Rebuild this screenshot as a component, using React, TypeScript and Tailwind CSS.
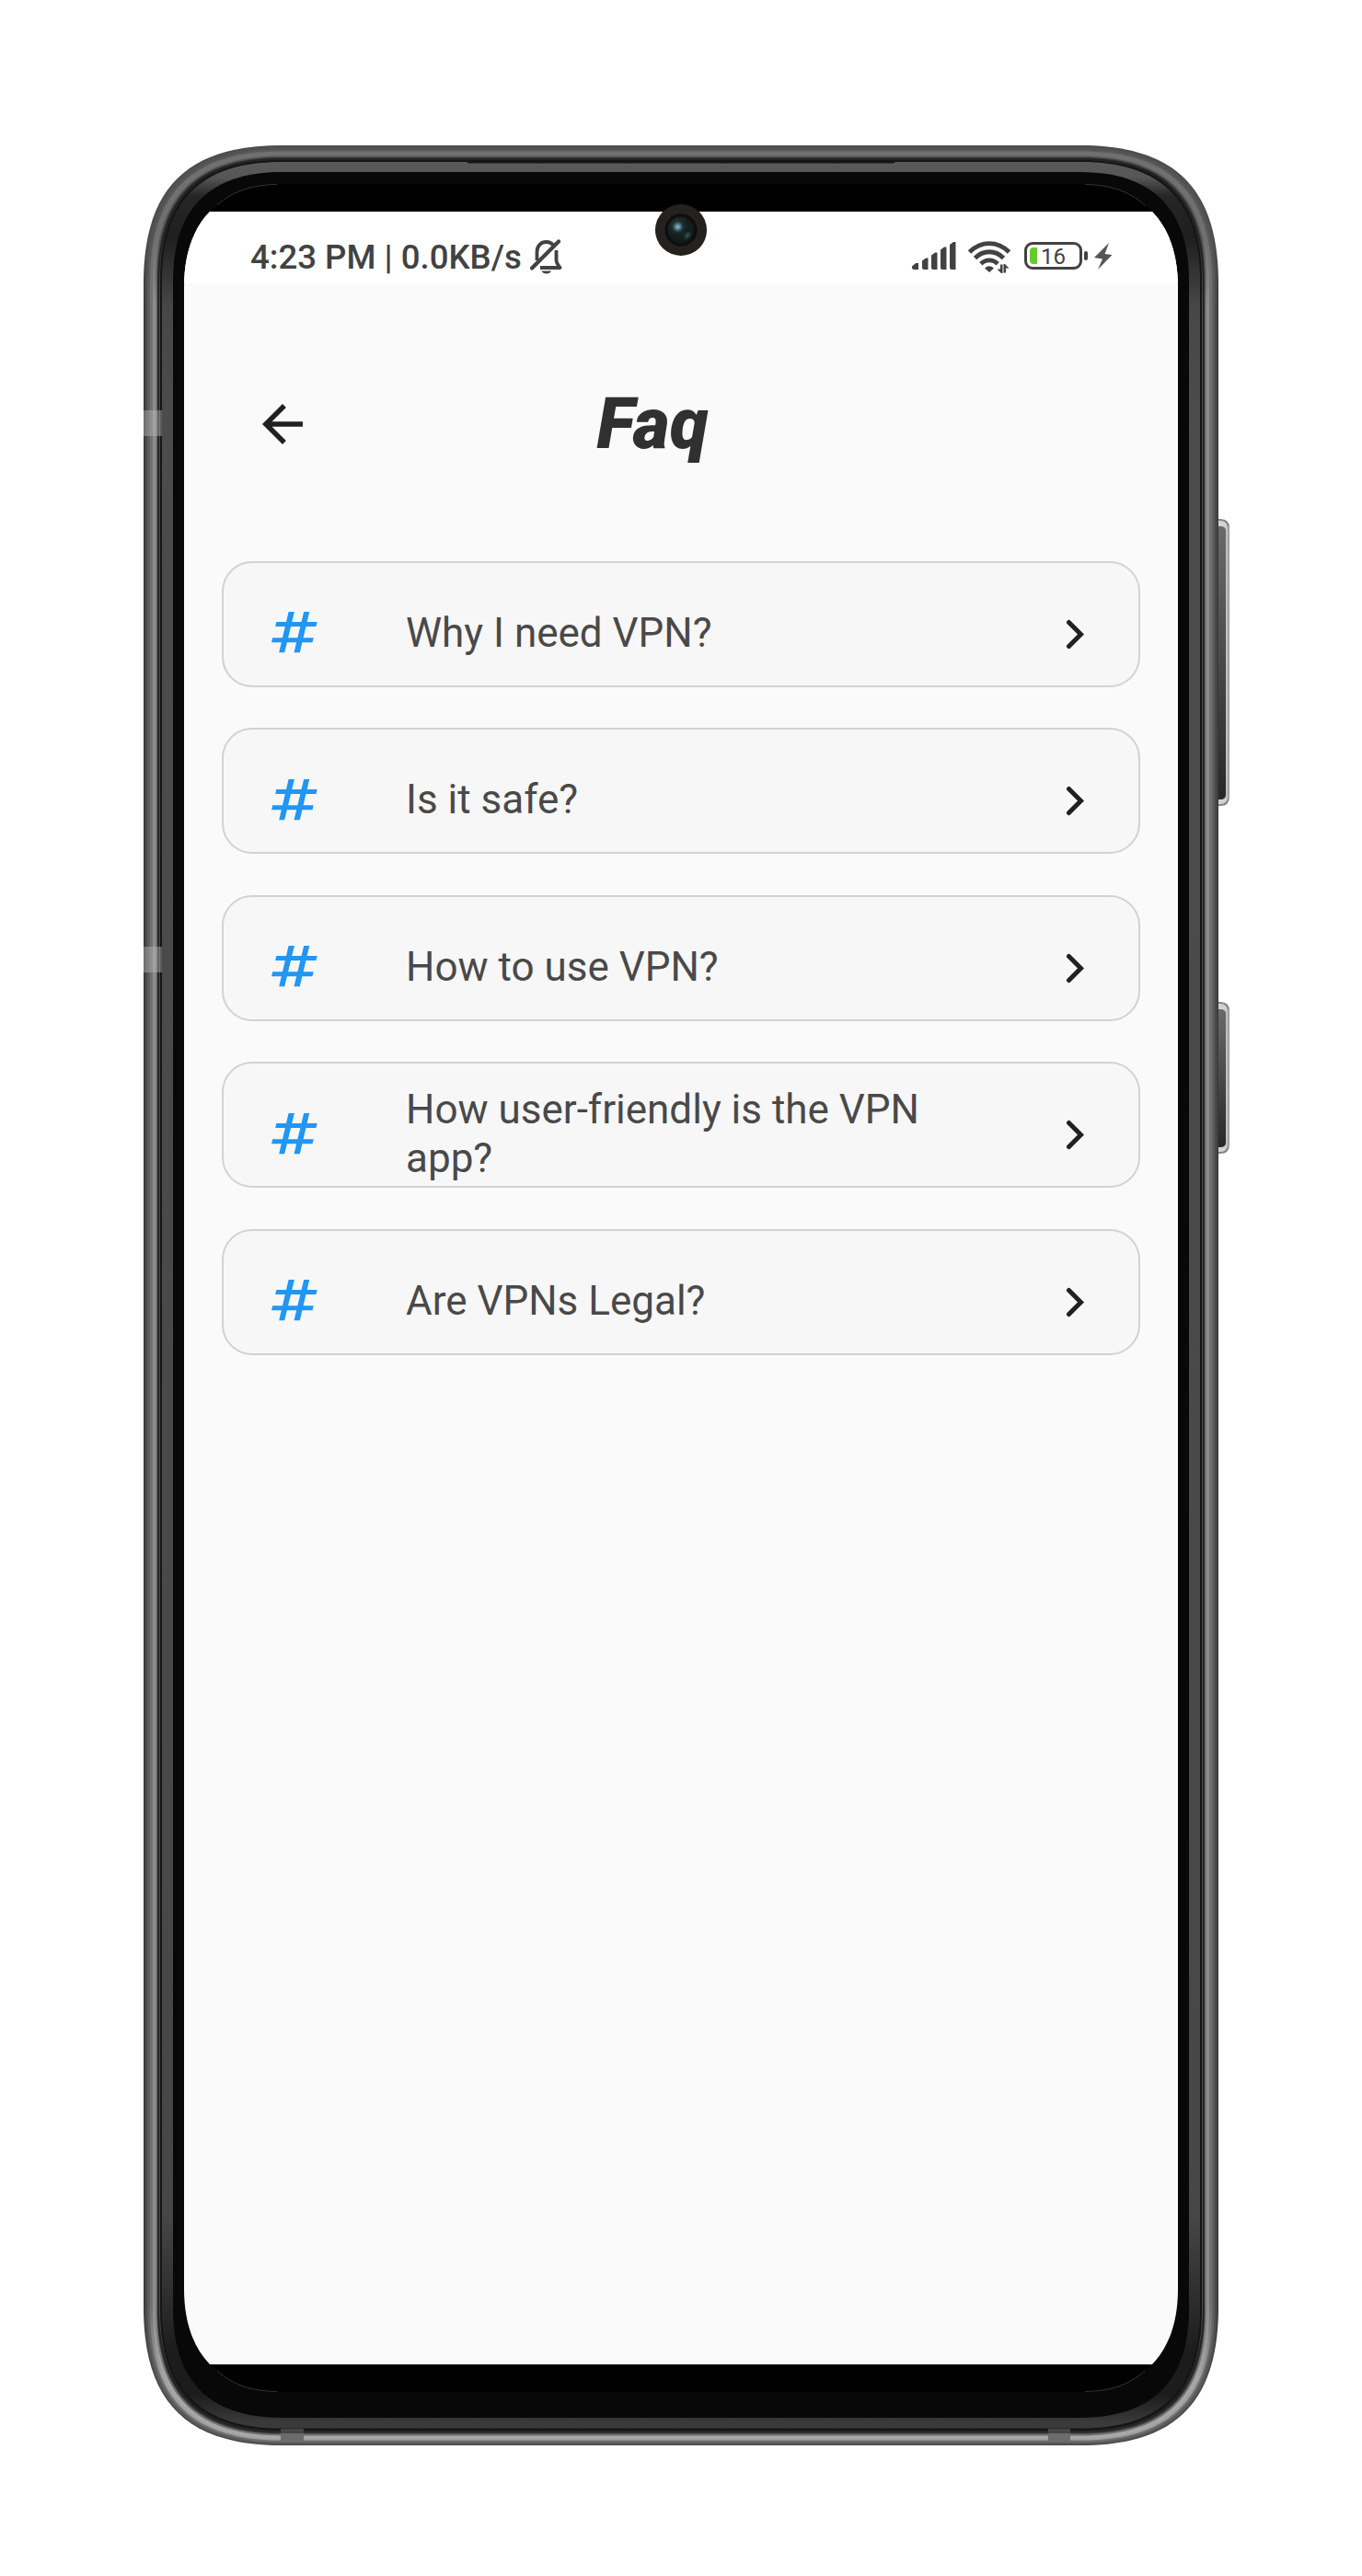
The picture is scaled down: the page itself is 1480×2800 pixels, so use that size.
import React from "react";

const questions = [
  "Why I need VPN?",
  "Is it safe?",
  "How to use VPN?",
  "How user-friendly is the VPN app?",
  "Are VPNs Legal?",
];

/* Rectangle with soft, squircle-like corners. l: corner length, a: handle offset. */
function squircle(x0: number, y0: number, x1: number, y1: number, l: number, a: number) {
  return [
    `M${x0} ${y0 + l}`,
    `C${x0} ${y0 + a} ${x0 + a} ${y0} ${x0 + l} ${y0}`,
    `H${x1 - l}`,
    `C${x1 - a} ${y0} ${x1} ${y0 + a} ${x1} ${y0 + l}`,
    `V${y1 - l}`,
    `C${x1} ${y1 - a} ${x1 - a} ${y1} ${x1 - l} ${y1}`,
    `H${x0 + l}`,
    `C${x0 + a} ${y1} ${x0} ${y1 - a} ${x0} ${y1 - l}`,
    "Z",
  ].join("");
}

/* inset left/right, top, bottom, corner, handle, fill */
const rings: [number, number, number, number, number, string][] = [
  [0, 0, 0, 150, 47, "url(#edge)"],
  [2, 2, 1.5, 148, 46, "url(#outer1)"],
  [4.5, 4.5, 3.5, 146, 46, "url(#outer2)"],
  [7, 6.5, 5.5, 143, 45, "url(#outer3)"],
  [10, 8, 7, 140, 45, "url(#outer4)"],
  [12.5, 11.5, 10.5, 137, 44, "url(#outer5)"],
  [14.5, 13, 12.5, 135, 43, "#3a3a3a"],
  [15.5, 14, 14, 134, 43, "#222222"],
  [17, 15.2, 15.5, 133, 43, "url(#groove)"],
  [18, 16, 16, 132, 42, "#151515"],
  [20, 18, 18.5, 130, 42, "url(#inner)"],
  [32, 29, 30, 118, 40, "#080808"],
];

function PhoneFrame() {
  const stops = (top: string, side: string, bottom: string) => (
    <>
      <stop offset="0" stopColor={top} />
      <stop offset="0.04" stopColor={top} />
      <stop offset="0.07" stopColor={side} />
      <stop offset="0.94" stopColor={side} />
      <stop offset="0.97" stopColor={bottom} />
      <stop offset="1" stopColor={bottom} />
    </>
  );
  const g = { gradientUnits: "userSpaceOnUse" as const, x1: 0, y1: 0, x2: 0, y2: 2500 };
  return (
    <svg className="absolute inset-0" width="1180" height="2500" viewBox="0 0 1180 2500" fill="none">
      <defs>
        <linearGradient id="edge" {...g}>{stops("#4c4c4c", "#3c3c3c", "#4a4a4a")}</linearGradient>
        <linearGradient id="outer1" {...g}>{stops("#525252", "#4c4c4c", "#5a5a5a")}</linearGradient>
        <linearGradient id="outer2" {...g}>{stops("#595959", "#606060", "#707070")}</linearGradient>
        <linearGradient id="outer3" {...g}>{stops("#707070", "#717171", "#a0a0a0")}</linearGradient>
        <linearGradient id="outer4" {...g}>{stops("#707070", "#8e8e8e", "#a8a8a8")}</linearGradient>
        <linearGradient id="outer5" {...g}>{stops("#555555", "#868686", "#707070")}</linearGradient>
        <linearGradient id="groove" {...g}>{stops("#2a2a2a", "#4b4b4b", "#333333")}</linearGradient>
        <linearGradient id="inner" gradientUnits="userSpaceOnUse" x1="0" y1="0" x2="0" y2="2500">
          <stop offset="0.007" stopColor="#5a5a5a" />
          <stop offset="0.014" stopColor="#565656" />
          <stop offset="0.022" stopColor="#262626" />
          <stop offset="0.04" stopColor="#1f1f1f" />
          <stop offset="0.07" stopColor="#474747" />
          <stop offset="0.12" stopColor="#4c4c4c" />
          <stop offset="0.9" stopColor="#474747" />
          <stop offset="0.96" stopColor="#1c1c1c" />
          <stop offset="0.978" stopColor="#1c1c1c" />
          <stop offset="0.99" stopColor="#3a3a3a" />
        </linearGradient>
        <linearGradient id="key" x1="0" y1="0" x2="0" y2="1">
          <stop offset="0" stopColor="#6a6a6a" />
          <stop offset="1" stopColor="#282828" />
        </linearGradient>
        <linearGradient id="keySide" x1="0" y1="0" x2="1" y2="0">
          <stop offset="0" stopColor="#c9c9c9" />
          <stop offset="0.5" stopColor="#b5b5b5" />
          <stop offset="1" stopColor="#8e8e8e" />
        </linearGradient>
      </defs>
      {[[406, 312], [931, 165]].map(([y, h]) => (
        <g key={y}>
          <path d={`M1160 ${y}h10q10 0 10 10v${h - 20}q0 10 -10 10h-10z`} fill="#858585" />
          <path d={`M1160 ${y + 2}h10q8 0 8 9v${h - 22}q0 9 -8 9h-10z`} fill="#d2d2d2" />
          <path d={`M1176 ${y + 8}h2q2 0 2 3v${h - 20}l-4 4z`} fill="url(#keySide)" />
          <path d={`M1160 ${y + 8}h10q6 0 6 5v${h - 25}q0 5 -6 5h-10z`} fill="url(#key)" />
        </g>
      ))}
      {rings.map(([x, t, b, l, a, fill]) => (
        <path key={x} d={squircle(x, t, 1168 - x, 2500 - b, l, a)} fill={fill} />
      ))}
      <path d="M349 16.5H819L815 19.5H353Z" fill="#161616" />
      <path d={squircle(44, 42, 1124, 2442, 112, 40)} fill="#000000" />
      <path d="M80 65C98 49 118 43 145 42.500M1088 65C1070 49 1050 43 1023 42.500M80 2419C98 2435 118 2441 145 2441.500M1088 2419C1070 2435 1050 2441 1023 2441.500" stroke="#3c3c3c" strokeWidth="0.8" />
      <g fill="#bdbdbd" fillOpacity="0.42">
        <rect x="0" y="288" width="20" height="28" />
        <rect x="0" y="871" width="20" height="28" />
      </g>
      <g fill="#464646">
        <rect x="149" y="2482" width="25" height="6" />
        <rect x="983" y="2482" width="24" height="6" />
      </g>
      <g fill="#6b6b6b">
        <rect x="149" y="2487" width="25" height="8" />
        <rect x="983" y="2487" width="24" height="8" />
      </g>
    </svg>
  );
}

function BellOff() {
  return (
    <svg className="ml-[9px] mt-px" width="35" height="38" viewBox="0 0 35 38" fill="none" stroke="#424242" strokeWidth="3.800">
      <path d="M7.500 23V14C7.500 7 12 3 17.500 3c3.400 0 6.300 1.400 8 4" />
      <path d="M2 31.500 31 2.500" strokeWidth="4.200" strokeLinecap="round" />
      <path d="M28.500 12v11c0 3.500 2 5 4 8H11" strokeLinejoin="round" />
      <path d="M12.500 34.500h10.500c-1 2.200-3 3-5.250 3s-4.250-.8-5.250-3z" fill="#424242" stroke="none" />
    </svg>
  );
}

function Signal() {
  return (
    <svg width="49" height="32" viewBox="0 0 49 32" fill="#424242">
      <path d="M0 27.500 4 24h3v7H2Q0 31 0 29zM11 21.500l4-3h2.500V31H13q-2 0-2-2zM21 15.500l4-3h2.500V31h-4.500q-2 0-2-2zM31 9.500l4-3h2.500V31h-4.500q-2 0-2-2zM41 4l4-3h2.500v30h-4.500q-2 0-2-2z" />
    </svg>
  );
}

function Wifi() {
  return (
    <svg className="ml-3" width="46" height="36" viewBox="0 0 46 36" fill="none" stroke="#424242" strokeWidth="4.800">
      <path d="M1.500 12C14-.5 32-.5 44.500 12" />
      <path d="M7.500 18.500C16.500 9.500 29.500 9.500 38.500 18.500" />
      <path d="M13.800 24.800C19 19.500 27 19.500 32.200 24.800" />
      <path d="M18 29.500q5-4.500 10 0l-5 4.500z" fill="#424242" stroke="none" />
      <path d="M31.500 30.500 35 30.500V25.500h2.500V35h-1.500zM44.500 29.500H41V34.500h-2.500V25h1.500z" fill="#424242" stroke="none" />
    </svg>
  );
}

function StatusBar() {
  return (
    <div className="flex h-[78px] items-start bg-white pl-[72px] pr-[71px] pt-[29px]">
      <span className="whitespace-pre text-[36.600px] font-medium leading-[42px] text-[#424242]">4:23 PM | 0.0KB/s</span>
      <BellOff />
      <div className="ml-auto mt-[3px] flex items-start">
        <Signal />
        <Wifi />
        <div className="ml-[15px] mt-px flex h-[30px] w-[63px] items-center rounded-[9px] border-[3px] border-[#424242] pl-[3px]">
          <div className="h-[18px] w-2 rounded-l-[4px] rounded-r-[1px] bg-[#67cb2d]" />
          <span className="ml-[4px] mt-[2px] text-[24px] leading-6 text-[#424242]">16</span>
        </div>
        <div className="ml-[2px] mt-[11px] h-[10px] w-1 rounded-[2px] bg-[#424242]" />
        <svg className="ml-[7px] mt-[1px]" width="20" height="31" viewBox="0 0 20 31" fill="#565656">
          <path d="M16 1 0 17l9 1.500L4 30 19.500 14l-8-1z" />
        </svg>
      </div>
    </div>
  );
}

function Hash() {
  return (
    <svg className="shrink-0" width="50" height="45" viewBox="0 0 50 45" fill="#2196f3">
      <path d="M18.600 0H24.900L14.200 44.300H8.200ZM35.200 0H41.200L30.800 44.300H24.500ZM5.300 11H49.700L48.400 16H4.200ZM1.200 28.300H45.700L44.500 33.300H.1Z" />
    </svg>
  );
}

function QuestionCard({ text }: { text: string }) {
  return (
    <li className="flex h-[137px] items-center rounded-[33px] border-2 border-[#d2d2d2] bg-[#f7f7f7] pl-[52px] pr-[58px]">
      <span className="mt-[19px]"><Hash /></span>
      <span className="ml-[96px] mt-[20px] w-[620px] text-[44px] leading-[53px] text-[#494949]">{text}</span>
      <svg className="ml-auto mt-[22px]" width="21" height="33" viewBox="0 0 21 33" fill="none" stroke="#212121" strokeWidth="5" strokeLinecap="round">
        <path d="M3.500 3.500 16.500 16.500 3.500 29.500" />
      </svg>
    </li>
  );
}

function Camera() {
  return (
    <svg className="absolute left-[512px] top-[-8px]" width="56" height="56" viewBox="0 0 56 56">
      <defs>
        <radialGradient id="lens" cx="0.38" cy="0.35" r="0.7">
          <stop offset="0" stopColor="#2b4247" />
          <stop offset="0.5" stopColor="#162022" />
          <stop offset="1" stopColor="#101616" />
        </radialGradient>
        <radialGradient id="glint">
          <stop offset="0" stopColor="#8fbccb" />
          <stop offset="0.4" stopColor="#6c98a8" stopOpacity="0.8" />
          <stop offset="1" stopColor="#36525c" stopOpacity="0" />
        </radialGradient>
        <radialGradient id="glow">
          <stop offset="0" stopColor="#2f5a52" />
          <stop offset="1" stopColor="#2f5a52" stopOpacity="0" />
        </radialGradient>
      </defs>
      <circle cx="28" cy="28" r="28" fill="#24211f" />
      <circle cx="28" cy="28" r="17.500" fill="#0e0d0d" />
      <circle cx="28" cy="28" r="14.500" fill="url(#lens)" />
      <circle cx="24.500" cy="24.500" r="6.500" fill="url(#glint)" />
      <ellipse cx="35" cy="34" rx="6" ry="4" transform="rotate(-45 35 34)" fill="url(#glow)" />
    </svg>
  );
}

export default function App() {
  return (
    <div className="h-[2800px] w-[1480px] bg-white pl-[156px] pt-[158px] font-['Roboto',sans-serif]">
      <div className="relative h-[2500px] w-[1180px] pl-[44px] pt-[72px]">
        <PhoneFrame />
        <div className="relative h-[2340px] w-[1080px]">
          <main
            className="h-full w-full bg-[#fafafa]"
            style={{ clipPath: `path("${squircle(0, -30, 1080, 2370, 112, 40)}")` }}
          >
            <StatusBar />
            <header className="flex h-[301.500px] items-start pl-[74px] pt-[120px]">
              <svg width="66" height="66" viewBox="0 0 24 24" fill="#212121">
                <path d="M20 11H7.830l5.590-5.590L12 4l-8 8 8 8 1.410-1.410L7.830 13H20v-2z" />
              </svg>
              <h1 className="ml-[308.500px] mt-[-12px] text-[77px] font-black italic leading-[90px] text-[#303030]">Faq</h1>
            </header>
            <ul className="flex flex-col gap-[44.500px] pl-[41px] pr-[41px]">
              {questions.map((q) => (
                <QuestionCard key={q} text={q} />
              ))}
            </ul>
          </main>
          <Camera />
        </div>
      </div>
    </div>
  );
}
